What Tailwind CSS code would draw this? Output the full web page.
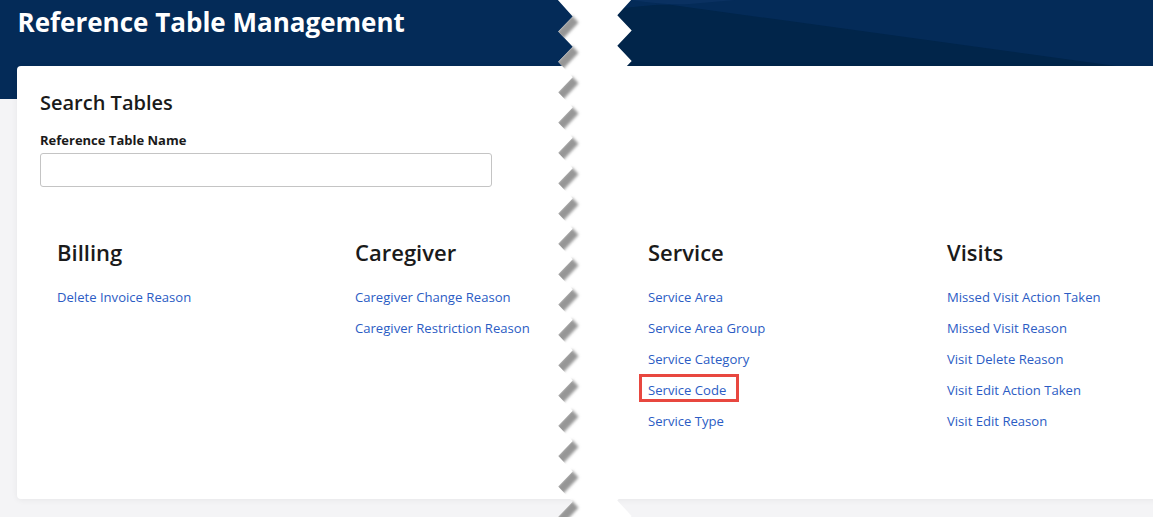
<!DOCTYPE html>
<html lang="en">
  <head>
    <meta charset="UTF-8" />
    <meta name="viewport" content="width=device-width, initial-scale=1.0" />
    <title>Reference Table Management</title>
    <script src="https://cdn.jsdelivr.net/npm/@tailwindcss/browser@4"></script>
  </head>
  <body class="relative h-[517px] overflow-hidden bg-[#f4f4f6] font-['Open_Sans',sans-serif] text-[#1a1a1a]">
    <!-- header band, sits behind the card -->
    <header class="relative h-[99px] overflow-hidden bg-[#042b58] pl-[17.5px]">
      <svg class="absolute left-0 top-0" width="1153" height="99" viewBox="0 0 1153 99">
        <path d="M618 9 C640 6 660 4 672 5 L1116 66 L1153 66 L1153 99 L618 99 Z" fill="#01254a" />
        <path d="M632 0 C650 3 670 5 690 4 C705 3 720 1 735 0 Z" fill="#0a3161" />
      </svg>
      <h1 class="relative pt-[4px] text-[26px] font-bold leading-[36px] text-white">Reference Table Management</h1>
    </header>

    <main class="absolute left-[17px] right-[-10px] top-[66px] h-[433px] rounded-[4px] bg-white pl-[23px] pt-[24px] shadow-[0_1px_6px_rgba(0,0,0,0.06)]">
      <h2 class="text-[20px] font-semibold leading-[26px]">Search Tables</h2>
      <label class="mt-[15px] block text-[13px] font-bold leading-[18px]" for="table-name">Reference Table Name</label>
      <input id="table-name" type="text" class="mt-[4px] block h-[34px] w-[452px] rounded-[3px] border border-[#c4c4c4] bg-white" />

      <div class="mt-[49px] grid grid-cols-[298px_293px_299px_1fr] pl-[17px]">
        <section>
          <h3 class="text-[22px] font-semibold leading-[32px]">Billing</h3>
          <ul class="mt-[20px] flex flex-col gap-[13px] text-[13.1px] leading-[18px] text-[#2b5cc4]">
            <li>Delete Invoice Reason</li>
          </ul>
        </section>
        <section>
          <h3 class="text-[22px] font-semibold leading-[32px]">Caregiver</h3>
          <ul class="mt-[20px] flex flex-col gap-[13px] text-[13.1px] leading-[18px] text-[#2b5cc4]">
            <li>Caregiver Change Reason</li>
            <li>Caregiver Restriction Reason</li>
          </ul>
        </section>
        <section>
          <h3 class="text-[22px] font-semibold leading-[32px]">Service</h3>
          <ul class="mt-[20px] flex flex-col gap-[13px] text-[13.1px] leading-[18px] text-[#2b5cc4]">
            <li>Service Area</li>
            <li>Service Area Group</li>
            <li>Service Category</li>
            <li class="relative">
              Service Code
              <span class="absolute left-[-9px] top-[-7px] h-[28px] w-[100px] border-[3px] border-[#e8473f]"></span>
            </li>
            <li>Service Type</li>
          </ul>
        </section>
        <section>
          <h3 class="text-[22px] font-semibold leading-[32px]">Visits</h3>
          <ul class="mt-[20px] flex flex-col gap-[13px] text-[13.1px] leading-[18px] text-[#2b5cc4]">
            <li>Missed Visit Action Taken</li>
            <li>Missed Visit Reason</li>
            <li>Visit Delete Reason</li>
            <li>Visit Edit Action Taken</li>
            <li>Visit Edit Reason</li>
          </ul>
        </section>
      </div>
    </main>

    <!-- torn page gap over the middle of the screenshot -->
    <svg class="absolute left-0 top-0" width="1153" height="517" viewBox="0 0 1153 517">
      <defs>
        <clipPath id="tear-clip"><polygon id="tear-clip-shape" /></clipPath>
        <filter id="tooth-blur" x="-30%" y="-30%" width="160%" height="160%">
          <feGaussianBlur stdDeviation="1.5" />
        </filter>
      </defs>
      <polygon id="tear" fill="#ffffff" />
      <g id="teeth" clip-path="url(#tear-clip)"></g>
    </svg>

    <script>
      const STEP = 30.33;
      const left = [[557, -1]];
      const right = [];
      for (let k = 0; k < 18; k++) {
        left.push([572.7, 16.5 + STEP * k], [558.2, 31.5 + STEP * k]);
      }
      right.push([632, -1]);
      for (let k = 0; k < 18; k++) {
        right.push([617.3, 15.3 + STEP * k], [631.7, 30.6 + STEP * k]);
      }
      const pts = left.concat(right.reverse()).map((p) => p.join(",")).join(" ");
      document.getElementById("tear").setAttribute("points", pts);
      document.getElementById("tear-clip-shape").setAttribute("points", pts);

      const teeth = document.getElementById("teeth");
      for (let k = 0; k < 17; k++) {
        const y = 31.5 + STEP * k;
        const tooth = document.createElementNS("http://www.w3.org/2000/svg", "polygon");
        const band = [[550, y + 8], [572, y - 16], [578.5, y - 9], [556, y + 15]];
        tooth.setAttribute("points", band.map((p) => p.join(",")).join(" "));
        tooth.setAttribute("fill", "#969696");
        tooth.setAttribute("filter", "url(#tooth-blur)");
        teeth.appendChild(tooth);
      }
    </script>
  </body>
</html>
